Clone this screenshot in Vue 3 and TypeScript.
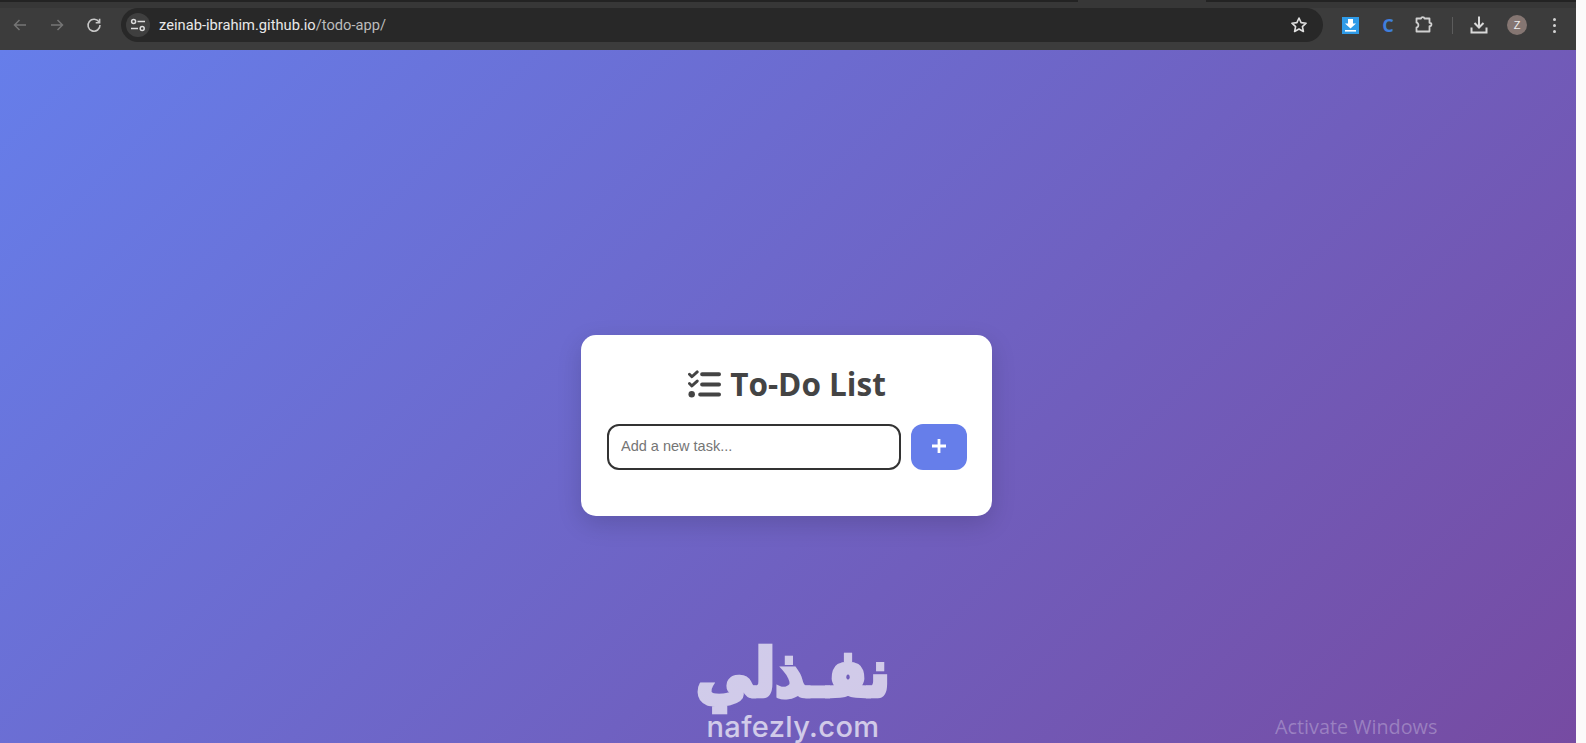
<script setup lang="ts">
const title: string = 'To-Do List'
</script>

<template>
  <div class="screen">
    <div class="window">
      <header class="chrome">
        <div class="tabstrip">
          <div class="strip-dark strip-left"></div>
          <div class="strip-gap"></div>
          <div class="strip-dark strip-right"></div>
        </div>
        <div class="toolbar">
          <div class="nav">
            <button class="tb dim">
              <svg width="16" height="16" viewBox="0 0 16 16" fill="none" stroke="currentColor" stroke-width="1.5"><path d="M14 8H2.500M7.500 3 2.500 8l5 5" /></svg>
            </button>
            <button class="tb dim">
              <svg width="16" height="16" viewBox="0 0 16 16" fill="none" stroke="currentColor" stroke-width="1.5"><path d="M2 8h11.500M8.500 3l5 5-5 5" /></svg>
            </button>
            <button class="tb">
              <svg width="16" height="16" viewBox="0 0 16 16" fill="none" stroke="currentColor" stroke-width="1.6"><path d="M13.200 5.200A6 6 0 1 0 14 8" /><path d="M13.600 1.800v3.900H9.700" /></svg>
            </button>
          </div>
          <div class="omnibox">
            <span class="tune">
              <svg width="16" height="14" viewBox="0 0 16 14" fill="none" stroke="currentColor" stroke-width="1.5"><circle cx="3.600" cy="3.400" r="2" /><path d="M7.500 3.400H15M1 10.400h7" /><circle cx="12.200" cy="10.400" r="2" /></svg>
            </span>
            <span class="url">zeinab-ibrahim.github.io<span class="path">/todo-app/</span></span>
            <svg class="star" width="18" height="18" viewBox="0 0 18 18" fill="none" stroke="currentColor" stroke-width="1.6" stroke-linejoin="round"><path d="M9 2l2.100 4.600 5 .6-3.700 3.400 1 4.900L9 13l-4.400 2.500 1-4.900L1.900 7.200l5-.6z" /></svg>
          </div>
          <div class="actions">
            <span class="ext-blue">
              <svg width="17" height="17" viewBox="0 0 17 17"><rect width="17" height="17" fill="#2f9be8" /><path d="M6 2h5v4.500h3L8.500 11.500 3 6.500h3z" fill="#fff" /><rect x="3" y="13" width="11" height="1.600" fill="#fff" /></svg>
            </span>
            <span class="ext-c">C</span>
            <span class="puzzle">
              <svg width="20" height="20" viewBox="0 0 20 20" fill="none" stroke="currentColor" stroke-width="1.800" stroke-linejoin="round"><path d="M2.500 3.500h4.500c.3-1.800 3.200-1.800 3.500 0h5v4.300c2.600-.3 2.600 3.700 0 3.400v5.300h-13v-4c2.500.2 2.500-5 0-4.800z" /></svg>
            </span>
            <span class="sep"></span>
            <span class="dl">
              <svg width="20" height="20" viewBox="0 0 20 20" fill="none" stroke="currentColor" stroke-width="2"><path d="M10 1.500v11M5.500 8l4.500 4.500L14.500 8M2.500 12.500v5h15v-5" /></svg>
            </span>
            <span class="avatar">Z</span>
            <span class="dots"><i></i><i></i><i></i></span>
          </div>
        </div>
      </header>

      <main class="page">
        <section class="card">
          <h1 class="heading">
            <svg class="list-icon" width="33" height="28" viewBox="0 0 34 28" fill="none" stroke="#444" stroke-linecap="round" stroke-linejoin="round">
              <path d="M1.500 4l2.500 2.500L9.500 1.500M1.500 13.500l2.500 2.500L9.500 11" stroke-width="3" />
              <path d="M14.500 4h17.500M14.500 14.500h17.500M12.500 24.800h19.500" stroke-width="4" />
              <circle cx="3.800" cy="24.500" r="3.300" fill="#444" stroke="none" />
            </svg>
            <span>{{ title }}</span>
          </h1>
          <div class="add-row">
            <input class="task-input" type="text" placeholder="Add a new task..." />
            <button class="add-btn" aria-label="Add">
              <svg width="14" height="14" viewBox="0 0 14 14" stroke="#fff" stroke-width="2.800" fill="none"><path d="M7 0v14M0 7h14" /></svg>
            </button>
          </div>
        </section>

        <div class="watermark">
          <div class="wm-ar" dir="rtl" lang="ar">نفـذلي</div>
          <div class="wm-en">nafezly.com</div>
        </div>
        <div class="activate">Activate Windows</div>
      </main>
    </div>
    <div class="strip"></div>
  </div>
</template>

<style scoped>
.screen {
  display: flex;
  width: 1586px;
  height: 743px;
  overflow: hidden;
}
.window {
  flex: 0 0 1576px;
  display: flex;
  flex-direction: column;
}
.strip {
  flex: 1;
  background: #fbfafa;
}
.chrome {
  flex: 0 0 50px;
  background: #3c3c3c;
  display: flex;
  flex-direction: column;
}
.tabstrip {
  flex: 0 0 8px;
  display: flex;
  background: #373737;
}
.strip-dark {
  height: 2px;
  background: #232323;
}
.strip-left { flex: 0 0 1078px; }
.strip-gap { flex: 0 0 128px; }
.strip-right { flex: 1; }
.toolbar {
  height: 34px;
  display: flex;
  align-items: center;
}
.nav {
  display: flex;
  padding-left: 1px;
  width: 121px;
  box-sizing: border-box;
}
.tb {
  width: 37px;
  height: 34px;
  border: 0;
  padding: 0;
  background: none;
  color: #c8c8c8;
  display: flex;
  align-items: center;
  justify-content: center;
}
.tb.dim { color: #757575; }
.omnibox {
  width: 1202px;
  height: 34px;
  border-radius: 17px;
  background: #282828;
  display: flex;
  align-items: center;
  padding-left: 5px;
  box-sizing: border-box;
}
.tune {
  width: 24px;
  height: 24px;
  border-radius: 50%;
  background: #3f3f3f;
  color: #dcdcdc;
  display: flex;
  align-items: center;
  justify-content: center;
}
.url {
  margin-left: 9px;
  flex: 1;
  font: 14.700px "Roboto", "Open Sans", sans-serif;
  color: #e8e8e8;
}
.path { color: #bcbcbc; }
.star {
  color: #e0e0e0;
  margin-right: 15px;
}
.actions {
  flex: 1;
  display: flex;
  align-items: center;
  height: 34px;
  padding-left: 19px;
}
.ext-blue {
  display: flex;
  width: 17px;
}
.ext-c {
  margin-left: 21px;
  width: 16px;
  text-align: center;
  font: 700 18px "Open Sans", sans-serif;
  color: #3f7fdc;
}
.puzzle {
  margin-left: 18px;
  display: flex;
  color: #d0d0d0;
}
.sep {
  margin-left: 18px;
  width: 1px;
  height: 17px;
  background: #5c5c5c;
}
.dl {
  margin-left: 16px;
  display: flex;
  color: #d8d8d8;
}
.avatar {
  margin-left: 18px;
  width: 20px;
  height: 20px;
  border-radius: 50%;
  background: #857672;
  color: #eee;
  font: 11px/20px "Liberation Sans", sans-serif;
  text-align: center;
}
.dots {
  margin-left: 26px;
  display: flex;
  flex-direction: column;
  gap: 3px;
}
.dots i {
  width: 3px;
  height: 3px;
  border-radius: 50%;
  background: #d4d4d4;
}
.page {
  flex: 1;
  position: relative;
  background: linear-gradient(135deg, #667eea 0%, #764ba2 100%);
  display: flex;
  justify-content: center;
  align-items: flex-start;
  padding-top: 285px;
  padding-right: 3px;
  box-sizing: border-box;
}
.card {
  width: 411px;
  height: 181px;
  box-sizing: border-box;
  background: #fff;
  border-radius: 15px;
  padding: 26px 25px 0 26px;
  box-shadow: 0 8px 25px rgba(0, 0, 0, 0.15);
}
.heading {
  margin: 1px 0 19px;
  height: 43px;
  display: flex;
  align-items: center;
  justify-content: center;
  gap: 9px;
  font: 700 31.500px/43px "Open Sans", sans-serif;
  color: #444;
}
.add-row {
  display: flex;
  gap: 10px;
}
.task-input {
  flex: 1;
  min-width: 0;
  height: 46px;
  box-sizing: border-box;
  border: 2px solid #333;
  border-radius: 12px;
  padding: 0 12px 2px;
  font: 14.500px "Liberation Sans", Arial, sans-serif;
  outline: none;
  background: #fff;
}
.task-input::placeholder { color: #757575; }
.add-btn {
  flex: 0 0 56px;
  height: 46px;
  border: 0;
  border-radius: 12px;
  background: #667eea;
  display: flex;
  align-items: center;
  justify-content: center;
  padding: 0 0 2px;
}
.watermark {
  position: absolute;
  left: 688px;
  top: 593px;
  width: 210px;
  text-align: center;
  color: #fff;
  opacity: 0.68;
}
.wm-ar {
  font: 700 57px/60px "DejaVu Sans", sans-serif;
  -webkit-text-stroke: 4px #fff;
  transform: scaleY(1.15);
}
.wm-en {
  margin-top: 9px;
  font: 500 29px/30px "Inter", sans-serif;
  letter-spacing: 0.400px;
}
.activate {
  position: absolute;
  left: 1275px;
  top: 664px;
  font: 19.800px/26px "Open Sans", sans-serif;
  color: rgba(255, 255, 255, 0.28);
}
</style>
